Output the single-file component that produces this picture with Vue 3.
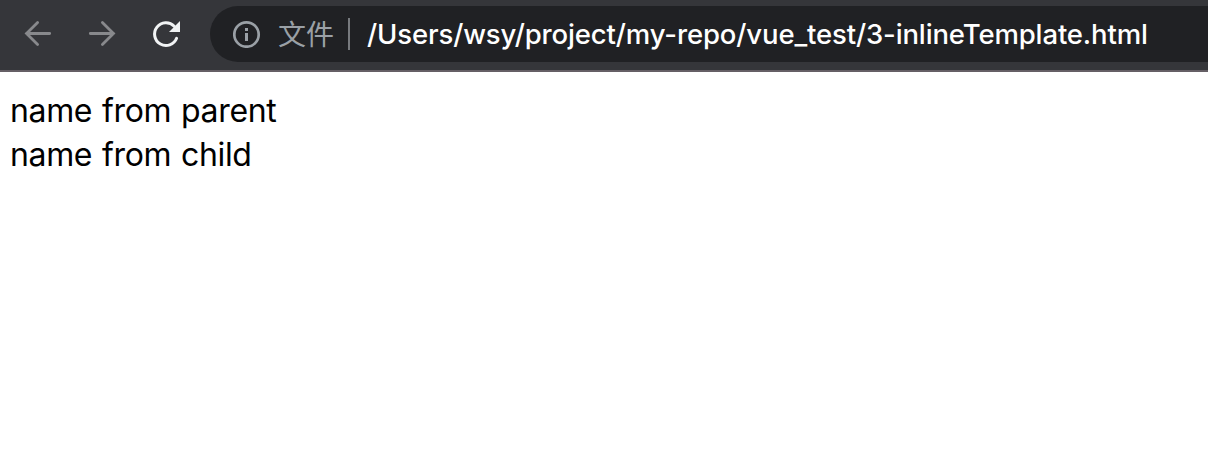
<script setup>
const lines = ['name from parent', 'name from child']
</script>

<template>
  <div class="window">
    <header class="toolbar">
      <svg class="nav" viewBox="0 0 210 70" fill="none" stroke-linecap="round">
        <g stroke="#88898c" stroke-width="2.8">
          <path d="M49.7 33.5H26.5M37.6 22.4L26.5 33.5L37.6 44.6" />
          <path d="M90.3 33.5H113.5M102.4 22.4L113.5 33.5L102.4 44.6" />
        </g>
        <path d="M176.6 38.3A11.4 11.4 0 1 1 174.2 26.2" stroke="#f1f3f4" stroke-width="3" />
        <path d="M180 21V32H169Z" fill="#f1f3f4" />
      </svg>
      <div class="address">
        <svg class="info" viewBox="0 0 28 28">
          <circle cx="13.5" cy="14.5" r="12.2" fill="none" stroke="#9aa0a6" stroke-width="2.7" />
          <path d="M12 8h3v3h-3zM12 13h3v8h-3z" fill="#9aa0a6" />
        </svg>
        <span class="scheme">文件</span>
        <span class="divider"></span>
        <span class="url">/Users/wsy/project/my-repo/vue_test/3-inlineTemplate.html</span>
      </div>
    </header>
    <main class="page">
      <div v-for="line in lines" :key="line" class="line">{{ line }}</div>
    </main>
  </div>
</template>

<style scoped>
.window {
  height: 462px;
  overflow: hidden;
  background: #fff;
}
.toolbar {
  box-sizing: border-box;
  height: 72px;
  display: flex;
  align-items: flex-start;
  background: #35363a;
  border-bottom: 2px solid #655f65;
}
.nav {
  flex: none;
  width: 210px;
  height: 70px;
}
.address {
  box-sizing: border-box;
  flex: 1;
  height: 56px;
  margin-top: 6px;
  padding-left: 23px;
  display: flex;
  align-items: center;
  border-radius: 28px 0 0 28px;
  background: #202124;
  white-space: nowrap;
}
.info {
  flex: none;
  width: 28px;
  height: 28px;
}
.scheme {
  width: 56px;
  margin-left: 17px;
  font: 28px/54px "Noto Sans CJK SC", sans-serif;
  height: 56px;
  color: #9aa0a6;
}
.divider {
  width: 2px;
  height: 32px;
  margin-left: 14px;
  background: #777a7e;
}
.url {
  margin-left: 17px;
  font: 500 27.5px/56px Inter, sans-serif;
  letter-spacing: -0.13px;
  color: #fff;
}
.page {
  padding: 17px 10px 0;
}
.line {
  font: 32px/44px Inter, sans-serif;
  letter-spacing: -0.35px;
  word-spacing: 1.2px;
  color: #000;
}
</style>
